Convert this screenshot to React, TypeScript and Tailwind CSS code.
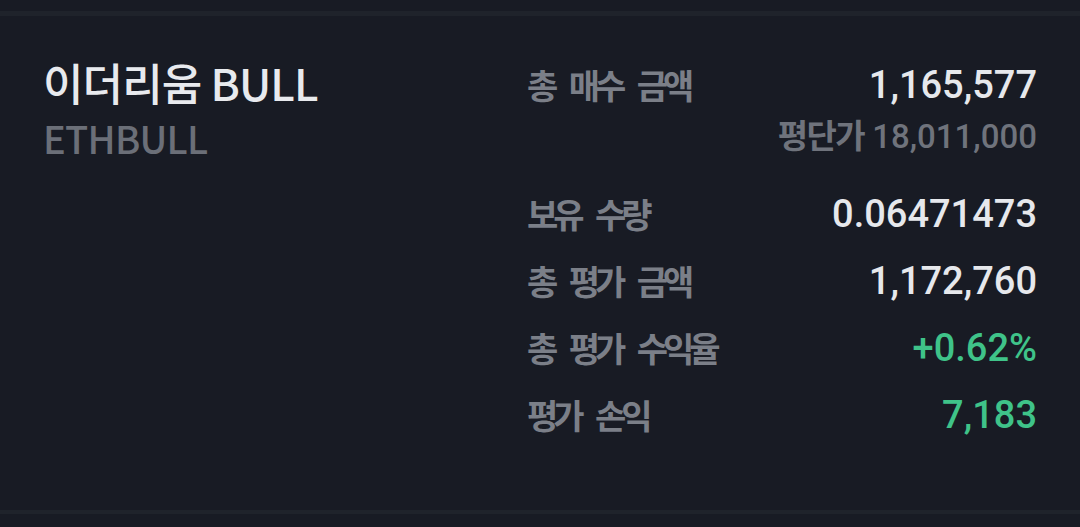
const KR = "font-['Noto_Sans_CJK_KR',sans-serif]";
const NUM = "font-['Roboto','Noto_Sans_CJK_KR',sans-serif]";

type Row = { label: string; value: string; tone?: 'up' };

const rows: Row[] = [
  { label: '보유 수량', value: '0.06471473' },
  { label: '총 평가 금액', value: '1,172,760' },
  { label: '총 평가 수익율', value: '+0.62%', tone: 'up' },
  { label: '평가 손익', value: '7,183', tone: 'up' },
];

function Label({ children }: { children: string }) {
  return (
    <span className={`${KR} text-[34px] leading-[38px] font-bold tracking-[-0.15em] [word-spacing:13px] text-[#7b7f88]`}>
      {children}
    </span>
  );
}

export default function App() {
  return (
    <div className="h-[527px] w-[1080px] bg-[#181b24] flex flex-col overflow-hidden">
      <div className="h-[11px]" />
      <div className="h-[5px] bg-[#1f232b]" />

      <div className="flex-1 flex px-[43px]">
        <div className="w-[484px] pt-[40px]">
          <div className={`${KR} text-[44px] leading-[52px] font-medium text-[#e8eaee] tracking-[-0.02em]`}>
            이더리움 BULL
          </div>
          <div className={`${KR} text-[38px] leading-[48px] font-medium text-[#6b6f78] tracking-[-0.02em] mt-[6px]`}>
            ETHBULL
          </div>
        </div>

        <div className="flex-1 pt-[50px]">
          <div className="flex justify-between items-start">
            <Label>총 매수 금액</Label>
            <div className="flex flex-col items-end">
              <span className={`${NUM} text-[38px] leading-[38px] font-medium text-[#e6e8ec]`}>1,165,577</span>
              <span className={`${NUM} text-[33px] leading-[36px] font-medium text-[#6f737c] mt-[12px]`}>
                <span className={`${KR} font-bold tracking-[-0.05em]`}>평단가</span> 18,011,000
              </span>
            </div>
          </div>

          <div className="flex flex-col mt-[40px] gap-[29px]">
            {rows.map((r) => (
              <div key={r.label} className="flex justify-between items-start">
                <Label>{r.label}</Label>
                <span
                  className={`${NUM} text-[38px] leading-[38px] font-medium ${
                    r.tone === 'up' ? 'text-[#3fc389]' : 'text-[#e6e8ec]'
                  }`}
                >
                  {r.value}
                </span>
              </div>
            ))}
          </div>
        </div>
      </div>

      <div className="h-[4px] bg-[#1f232b]" />
      <div className="h-[13px]" />
    </div>
  );
}
